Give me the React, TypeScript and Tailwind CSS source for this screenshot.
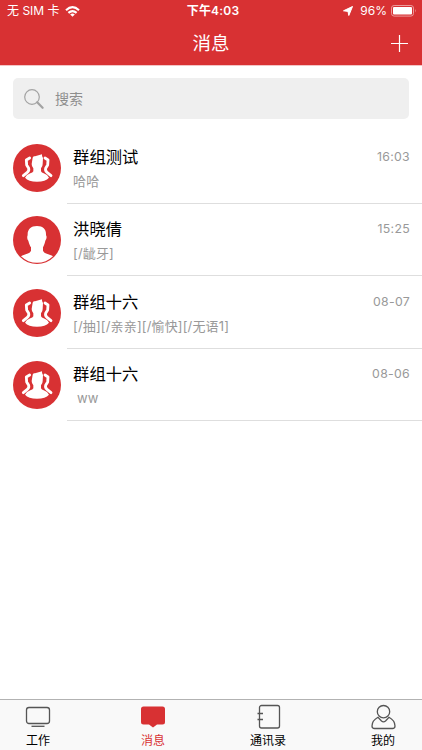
import type { ReactNode } from 'react';

type Chat = {
  id: number;
  name: string;
  preview: string;
  time: string;
  group: boolean;
};

const chats: Chat[] = [
  { id: 1, name: '群组测试', preview: '哈哈', time: '16:03', group: true },
  { id: 2, name: '洪晓倩', preview: '[/龇牙]', time: '15:25', group: false },
  { id: 3, name: '群组十六', preview: '[/抽][/亲亲][/愉快][/无语1]', time: '08-07', group: true },
  { id: 4, name: '群组十六', preview: '\u00a0ww', time: '08-06', group: true },
];

function GroupAvatar() {
  return (
    <svg viewBox="0 0 144 144" className="size-12 shrink-0">
      <circle cx="72" cy="72" r="72" fill="#d83133" />
      <path
        d="M59 41 Q60 35 66 37 L87 31 Q86 38 90 42 L89 60 Q89 68 84 73 V82 Q86 86 92 88 Q104 92 108 101 Q98 113 72 113 Q46 113 36 101 Q40 92 52 88 Q59 86 61 82 V73 Q56 68 56 60 Z"
        fill="#fff"
      />
      <path
        d="M50 42 L40 48 L41 63 L47 73 Q49 80 43 85 L31 95 M96 42 L105 48 L104 63 L98 73 Q96 80 102 85 L114 95"
        fill="none"
        stroke="#fff"
        strokeWidth="8.5"
        strokeLinecap="round"
        strokeLinejoin="round"
      />
    </svg>
  );
}

function PersonAvatar() {
  return (
    <svg viewBox="0 0 144 144" className="size-12 shrink-0">
      <circle cx="72" cy="72" r="72" fill="#d83133" />
      <path
        d="M72 30 C91 30 100 40 99 58 C102 60 101 70 97 74 C95 84 92 90 90 94 V104 C94 114 109 114 120 121 A69 69 0 0 1 24 121 C35 114 50 114 54 104 V94 C51 90 48 82 46 74 C42 70 42 60 44 58 C43 40 53 30 72 30Z"
        fill="#fff"
      />
    </svg>
  );
}

function StatusBar() {
  return (
    <div className="grid h-[22px] grid-cols-3 items-center px-[7px] text-xs text-white">
      <div className="flex items-center gap-[5px]">
        <span className="whitespace-nowrap">无 SIM 卡</span>
        <svg viewBox="0 0 15 11" className="h-[11px] w-[15px]" fill="none" stroke="#fff" strokeWidth="2.1">
          <path d="M1 4.2 Q7.5 -1.8 14 4.2 M3.4 6.9 Q7.5 3.2 11.6 6.9" />
          <path d="M5.2 8.4 Q7.5 6.4 9.8 8.4 L7.5 10.8Z" fill="#fff" stroke="none" />
        </svg>
      </div>
      <span className="pl-1 text-center font-semibold tracking-[0.2px]">下午4:03</span>
      <div className="flex items-center justify-end">
        <svg viewBox="0 0 10 10" className="mr-[7px] size-2.5">
          <path d="M0.5 4.8 L9.5 0.5 L5.8 9.5 L5 5.4Z" fill="#fff" stroke="#fff" strokeLinejoin="round" />
        </svg>
        <span className="mr-1 text-xs">96%</span>
        <svg viewBox="0 0 26 12" className="-mr-0.5 h-3 w-[26px]">
          <rect x="0.5" y="0.5" width="22" height="10.6" rx="2.6" fill="none" stroke="#ec9a9b" />
          <rect x="2" y="2" width="19" height="7.6" rx="1" fill="#fff" />
          <path d="M24 4 Q25.5 5.8 24 7.6Z" fill="#ec9a9b" />
        </svg>
      </div>
    </div>
  );
}

function Header() {
  return (
    <header className="h-[66px] shrink-0 border-b border-[#f3c4c5] bg-[#d83133]">
      <StatusBar />
      <div className="grid h-[43px] grid-cols-3 items-center px-3.5 text-white">
        <span />
        <h1 className="text-center text-[18.5px]">消息</h1>
        <svg viewBox="0 0 17 17" className="size-[17px] justify-self-end" stroke="#fff" strokeWidth="1.2">
          <path d="M8.5 0 V17 M0 8.5 H17" />
        </svg>
      </div>
    </header>
  );
}

function SearchBar() {
  return (
    <div className="mx-[13px] mt-3 flex h-[41px] shrink-0 items-center gap-[11px] rounded-[5px] bg-[#efefef] px-[11px] text-[#8e8e8e]">
      <svg viewBox="0 0 20 20" className="size-5" fill="none" stroke="#a3a3a3">
        <circle cx="8" cy="8" r="7.3" strokeWidth="1.2" />
        <path d="M13.2 13.2 L18.6 18.8" strokeWidth="2.2" strokeLinecap="round" />
      </svg>
      <span className="text-sm">搜索</span>
    </div>
  );
}

function ChatRow({ chat }: { chat: Chat }) {
  return (
    <li className="flex h-[72.5px] items-center pl-[12.6px]">
      {chat.group ? <GroupAvatar /> : <PersonAvatar />}
      <div className="ml-1.5 flex h-full flex-1 justify-between border-b border-[#dedede] pr-3 pl-[6.5px]">
        <div className="pt-[13.4px]">
          <p className="text-[16.3px] leading-6 text-black">{chat.name}</p>
          <p className="text-[13px] leading-6 tracking-[0.15px] text-[#999]">{chat.preview}</p>
        </div>
        <time className="pt-[15.4px] text-[12.3px] leading-5 tracking-[0.3px] text-[#999]">{chat.time}</time>
      </div>
    </li>
  );
}

const tabs: { label: string; active?: boolean; icon: ReactNode }[] = [
  {
    label: '工作',
    icon: (
      <>
        <rect x="2.5" y="4.5" width="23" height="16" rx="2.5" />
        <path d="M7.5 23.3 H20.5" />
      </>
    ),
  },
  {
    label: '消息',
    active: true,
    icon: (
      <path
        d="M4.5 3.5 H23.5 Q26 3.5 26 6 V19 Q26 21.5 23.5 21.5 H18 L14 24.5 L10 21.5 H4.5 Q2 21.5 2 19 V6 Q2 3.5 4.5 3.5Z"
        fill="#d83133"
        stroke="none"
      />
    ),
  },
  {
    label: '通讯录',
    icon: (
      <>
        <rect x="5.5" y="2.5" width="20" height="22.5" rx="2" />
        <path d="M3.5 10.5 H9 M3.5 16.5 H9" />
      </>
    ),
  },
  {
    label: '我的',
    icon: (
      <>
        <circle cx="14.5" cy="8.7" r="6.2" />
        <path d="M9 14.3 C5 16.5 3 19.5 3 23 Q3 25.5 5.5 25.5 H23.5 Q26 25.5 26 23 C26 19.5 24 16.5 20 14.3 L16.5 18 Q14.5 19.8 12.5 18Z" />
      </>
    ),
  },
];

function TabBar() {
  return (
    <nav className="flex h-[51px] shrink-0 justify-between border-t border-[#b2b2b2] bg-[#f9f9f9] pr-px">
      {tabs.map((tab) => (
        <a key={tab.label} className="flex w-[76px] flex-col items-center pt-[3px]">
          <svg viewBox="0 0 28 28" className="size-7" fill="none" stroke="#555" strokeWidth="1.3">
            {tab.icon}
          </svg>
          <span className={tab.active ? 'text-xs leading-[19px] text-[#d83133]' : 'text-xs leading-[19px] text-black'}>
            {tab.label}
          </span>
        </a>
      ))}
    </nav>
  );
}

export default function App() {
  return (
    <div className="flex h-screen flex-col overflow-hidden bg-white font-[Inter,'Noto_Sans_CJK_SC',sans-serif]">
      <Header />
      <SearchBar />
      <ul className="mt-[12.4px] flex-1">
        {chats.map((chat) => (
          <ChatRow key={chat.id} chat={chat} />
        ))}
      </ul>
      <TabBar />
    </div>
  );
}
